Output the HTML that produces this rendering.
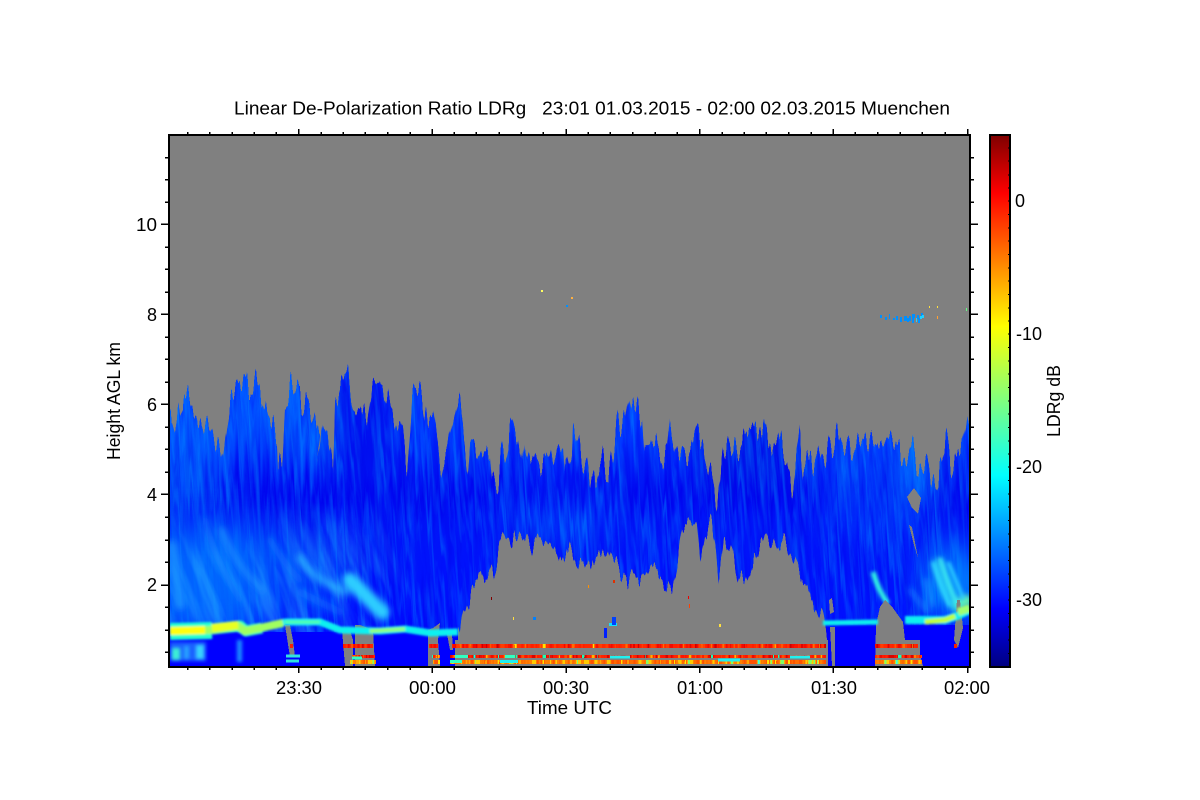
<!DOCTYPE html>
<html><head><meta charset="utf-8"><title>LDRg</title>
<style>html,body{margin:0;padding:0;background:#fff;width:1200px;height:800px;overflow:hidden}svg{display:block}text{font-family:"Liberation Sans",sans-serif;font-size:18px;fill:#000}</style></head>
<body>
<svg width="1200" height="800" viewBox="0 0 1200 800" xmlns="http://www.w3.org/2000/svg">
<defs>
<linearGradient id="jet" x1="0" y1="1" x2="0" y2="0">
<stop offset="0" stop-color="#00007f"/><stop offset=".11" stop-color="#0000ff"/><stop offset=".36" stop-color="#00ffff"/><stop offset=".5" stop-color="#7fff7f"/><stop offset=".64" stop-color="#ffff00"/><stop offset=".89" stop-color="#ff0000"/><stop offset="1" stop-color="#7f0000"/>
</linearGradient>
<linearGradient id="base" x1="0" y1="380" x2="0" y2="666" gradientUnits="userSpaceOnUse">
<stop offset="0" stop-color="#0038ff"/><stop offset=".18" stop-color="#0034ff"/><stop offset=".38" stop-color="#0006f0"/><stop offset=".48" stop-color="#0014f8"/><stop offset=".8" stop-color="#0010ff"/><stop offset="1" stop-color="#0000ff"/>
</linearGradient>
<linearGradient id="fadeX" x1="170" y1="0" x2="420" y2="0" gradientUnits="userSpaceOnUse">
<stop offset="0" stop-color="#fff"/><stop offset=".75" stop-color="#fff"/><stop offset="1" stop-color="#000"/>
</linearGradient>
<linearGradient id="fadeY" x1="0" y1="502" x2="0" y2="570" gradientUnits="userSpaceOnUse">
<stop offset="0" stop-color="#000" stop-opacity="1"/><stop offset="1" stop-color="#000" stop-opacity="0"/>
</linearGradient>
<mask id="lowmask" maskUnits="userSpaceOnUse" x="160" y="480" width="280" height="160"><g>
<rect x="160" y="480" width="280" height="160" fill="url(#fadeX)"/>
<rect x="160" y="480" width="280" height="160" fill="url(#fadeY)"/>
</g></mask>
<clipPath id="plot"><rect x="170" y="136" width="800" height="530"/></clipPath>
<clipPath id="cloud"><polygon points="170,402 172,400 177,417 180,393 183,387 188,393 197,402 207,423 213,435 220,440 223,448 227,407 230,390 240,390 247,382 253,382 263,403 268,417 277,423 278,450 282,458 285,397 300,390 313,405 320,430 317,460 323,417 328,430 333,460 335,387 340,380 348,375 353,397 363,407 367,420 372,385 383,375 390,400 393,413 400,427 407,457 412,393 422,385 428,417 433,423 440,460 443,447 447,447 450,433 453,413 457,398 460,410 465,440 468,463 470,437 480,443 490,450 492,480 498,470 505,443 510,420 518,440 522,467 525,433 530,450 535,447 540,453 550,457 557,430 563,437 565,470 572,447 573,423 578,437 587,460 590,480 600,457 610,460 613,447 618,423 625,410 628,389 632,413 642,410 645,447 657,440 667,450 670,417 678,447 687,443 692,445 697,433 703,443 713,477 717,497 723,450 733,430 740,450 747,430 763,425 768,443 778,438 787,457 793,480 800,428 803,460 820,452 835,442 842,435 853,438 862,433 867,428 883,433 900,442 917,453 927,460 933,477 947,445 953,460 962,450 968,410 970,410 970,700 170,700"/></clipPath>
<filter id="b18" filterUnits="userSpaceOnUse" x="100" y="440" width="900" height="240"><feGaussianBlur stdDeviation="18"/></filter>
<filter id="b14" filterUnits="userSpaceOnUse" x="100" y="340" width="900" height="300"><feGaussianBlur stdDeviation="14"/></filter>
<filter id="b3" filterUnits="userSpaceOnUse" x="150" y="500" width="840" height="180"><feGaussianBlur stdDeviation="3.2"/></filter>
<filter id="b2" filterUnits="userSpaceOnUse" x="150" y="500" width="840" height="180"><feGaussianBlur stdDeviation="1.8"/></filter>
<filter id="b1" filterUnits="userSpaceOnUse" x="160" y="590" width="820" height="60"><feGaussianBlur stdDeviation="1.1"/></filter>
<filter id="tl" filterUnits="userSpaceOnUse" x="-300" y="370" width="1400" height="300">
<feTurbulence type="fractalNoise" baseFrequency="0.22 0.012" numOctaves="3" seed="7"/>
<feColorMatrix type="matrix" values="0 0 0 0 0  0 0 0 0 .55  0 0 0 0 1  2.6 0 0 0 -1.05"/>
</filter>
<filter id="td" filterUnits="userSpaceOnUse" x="-300" y="370" width="1400" height="300">
<feTurbulence type="fractalNoise" baseFrequency="0.16 0.014" numOctaves="3" seed="21"/>
<feColorMatrix type="matrix" values="0 0 0 0 0  0 0 0 0 0  0 0 0 0 .82  2.8 0 0 0 -1.25"/>
</filter>
<filter id="tc" filterUnits="userSpaceOnUse" x="-300" y="370" width="1400" height="300">
<feTurbulence type="fractalNoise" baseFrequency="0.07 0.012" numOctaves="3" seed="33"/>
<feColorMatrix type="matrix" values="0 0 0 0 .05  0 0 0 0 .68  0 0 0 0 1  3 0 0 0 -1.25"/>
</filter>
<filter id="jag" filterUnits="userSpaceOnUse" x="160" y="340" width="820" height="370" color-interpolation-filters="sRGB">
<feTurbulence type="fractalNoise" baseFrequency="0.2 0.004" numOctaves="2" seed="4" result="n"/>
<feColorMatrix in="n" type="matrix" values="0 0 0 0 .5  1.8 0 0 0 -.53  0 0 0 0 .5  0 0 0 0 1" result="m"/>
<feDisplacementMap in="SourceGraphic" in2="m" scale="46" xChannelSelector="R" yChannelSelector="G"/>
</filter>
<filter id="jag2" filterUnits="userSpaceOnUse" x="440" y="500" width="410" height="210" color-interpolation-filters="sRGB">
<feTurbulence type="fractalNoise" baseFrequency="0.22 0.006" numOctaves="2" seed="11" result="n"/>
<feColorMatrix in="n" type="matrix" values="0 0 0 0 .5  1.8 0 0 0 -.4  0 0 0 0 .5  0 0 0 0 1" result="m"/>
<feDisplacementMap in="SourceGraphic" in2="m" scale="26" xChannelSelector="R" yChannelSelector="G"/>
</filter>
<filter id="band1" x="0" y="0" width="1" height="1" color-interpolation-filters="sRGB">
<feTurbulence type="fractalNoise" baseFrequency="0.28 0.001" numOctaves="2" seed="2"/>
<feColorMatrix type="matrix" values="1 0 0 0 0  1 0 0 0 0  1 0 0 0 0  0 0 0 0 1"/>
<feComponentTransfer>
<feFuncR type="discrete" tableValues="1 1 .8 .95 1 1 1 1 1 1"/>
<feFuncG type="discrete" tableValues=".9 .9 0 .04 .12 .16 .24 .42 .9 .9"/>
<feFuncB type="discrete" tableValues="0 0 0 0 0 0 0 0 0 0"/>
</feComponentTransfer>
</filter>
<filter id="band2" x="0" y="0" width="1" height="1" color-interpolation-filters="sRGB">
<feTurbulence type="fractalNoise" baseFrequency="0.26 0.001" numOctaves="2" seed="9"/>
<feColorMatrix type="matrix" values="1 0 0 0 0  1 0 0 0 0  1 0 0 0 0  0 0 0 0 1"/>
<feComponentTransfer>
<feFuncR type="discrete" tableValues="0 0 .1 .85 1 1 1 1 1 1"/>
<feFuncG type="discrete" tableValues="1 1 1 .02 .08 .14 .3 .7 1 1"/>
<feFuncB type="discrete" tableValues="1 1 .7 0 0 0 0 0 0 0"/>
</feComponentTransfer>
</filter>
<filter id="band3" x="0" y="0" width="1" height="1" color-interpolation-filters="sRGB">
<feTurbulence type="fractalNoise" baseFrequency="0.24 0.001" numOctaves="2" seed="15"/>
<feColorMatrix type="matrix" values="1 0 0 0 0  1 0 0 0 0  1 0 0 0 0  0 0 0 0 1"/>
<feComponentTransfer>
<feFuncR type="discrete" tableValues=".2 .2 .5 1 1 1 1 1 .1 .1"/>
<feFuncG type="discrete" tableValues="1 1 1 .8 .5 .42 .32 .9 1 1"/>
<feFuncB type="discrete" tableValues=".9 .9 .4 0 0 0 0 0 1 1"/>
</feComponentTransfer>
</filter>
</defs>

<rect x="169" y="135" width="801" height="531" fill="#808080"/>

<g clip-path="url(#plot)">
<g filter="url(#jag)">
<g clip-path="url(#cloud)">
<rect x="170" y="370" width="800" height="330" fill="url(#base)"/>
<g filter="url(#b14)">
<rect x="150" y="400" width="70" height="100" fill="#0068ff" opacity=".75"/>
<rect x="235" y="395" width="28" height="60" fill="#0070ff" opacity=".7"/>
<rect x="285" y="395" width="35" height="70" fill="#0070ff" opacity=".75"/>
<rect x="335" y="375" width="60" height="90" fill="#0000e8" opacity=".7"/>
<rect x="700" y="420" width="90" height="60" fill="#0000e0" opacity=".7"/>
<rect x="840" y="430" width="30" height="60" fill="#0070ff" opacity=".55"/>
<rect x="895" y="440" width="40" height="60" fill="#0080ff" opacity=".8"/>
<rect x="500" y="495" width="120" height="40" fill="#0058ff" opacity=".5"/>
<rect x="820" y="470" width="90" height="60" fill="#0040ff" opacity=".5"/>
</g>
<g transform="skewX(6)"><rect x="-100" y="380" width="1100" height="240" filter="url(#tl)" opacity=".32"/></g>
<g transform="skewX(4)"><rect x="-100" y="380" width="1100" height="240" filter="url(#td)" opacity=".38"/></g>
</g>
</g>
<!-- undisplaced soft areas -->
<g filter="url(#b18)">
<rect x="150" y="525" width="110" height="110" fill="#0078ff" opacity=".8"/>
<rect x="255" y="535" width="85" height="80" fill="#0060ff" opacity=".55"/>
<rect x="930" y="550" width="45" height="65" fill="#00a0ff" opacity=".95"/>
</g>
<!-- diagonal streak texture on the lower left -->
<g mask="url(#lowmask)"><g transform="skewX(20)"><rect x="-100" y="500" width="700" height="130" filter="url(#tc)" opacity=".3"/></g></g>
<!-- bright diagonal features -->
<g fill="none" stroke-linecap="round" filter="url(#b3)">
<path d="M172 545 L180 605" stroke="#30b8ff" stroke-width="9" opacity=".55"/>
<path d="M222 530 Q235 565 262 590" stroke="#28a8ff" stroke-width="6" opacity=".55"/>
<path d="M205 520 Q215 560 240 600" stroke="#1890ff" stroke-width="6" opacity=".4"/>
<path d="M270 540 Q285 565 300 580" stroke="#1890ff" stroke-width="6" opacity=".45"/>
<path d="M300 558 Q312 578 345 592" stroke="#30c0ff" stroke-width="8" opacity=".7"/>
<path d="M350 580 Q362 592 382 612" stroke="#30d8ff" stroke-width="15" opacity=".95"/>
<path d="M300 592 Q325 605 340 612" stroke="#1890ff" stroke-width="7" opacity=".45"/>
<path d="M926 580 L932 605" stroke="#20c0ff" stroke-width="4" opacity=".7"/>
<path d="M910 590 L928 612" stroke="#20b0ff" stroke-width="4" opacity=".6"/>
<path d="M958 605 L968 600" stroke="#70ffa0" stroke-width="10"/>
<path d="M938 565 Q946 590 956 606" stroke="#30e8f0" stroke-width="14" opacity=".6"/>
</g>
<g fill="none" filter="url(#b2)">
<path d="M873 572 Q878 590 888 604" stroke="#30ffe0" stroke-width="5"/>
<path d="M933 562 Q942 590 950 606" stroke="#30e0ff" stroke-width="3.500" opacity=".9"/>
<path d="M940 558 Q948 585 957 604" stroke="#40f0f0" stroke-width="3.500" opacity=".9"/>
<path d="M948 562 Q956 580 964 600" stroke="#30d8ff" stroke-width="3.500" opacity=".9"/>
</g>
<!-- below melting layer -->
<rect x="170" y="636" width="800" height="30" fill="#0000ff"/>
<rect x="205" y="632" width="260" height="34" fill="#0000ff"/>
<rect x="823" y="625" width="147" height="41" fill="#0000ff"/>
<g filter="url(#b2)">
<rect x="170" y="642" width="36" height="19" fill="#30b0ff" opacity=".55"/>
<rect x="172" y="648" width="8" height="12" fill="#40ffd0" opacity=".9"/>
<rect x="184" y="646" width="5" height="13" fill="#30d0ff" opacity=".6"/>
<rect x="196" y="645" width="8" height="14" fill="#40e8ff" opacity=".85"/>
<rect x="237" y="640" width="5" height="22" fill="#20a0ff" opacity=".9"/>
</g>

<!-- grey hole -->
<polygon filter="url(#jag2)" fill="#808080" points="458,700 458,640 460,630 463,610 473,590 490,577 497,560 500,548 508,538 515,532 522,538 530,548 537,535 545,540 555,556 563,567 567,552 573,558 578,568 585,572 592,560 600,552 612,558 622,570 628,578 640,577 650,565 655,572 660,580 672,585 677,560 682,530 690,525 697,530 700,560 705,535 712,525 716,550 719,577 722,560 724,545 732,548 740,580 744,583 748,570 752,560 760,550 768,537 778,543 787,548 793,565 800,580 807,585 815,605 823,623 828,643 828,700"/>
<g fill="#808080" shape-rendering="crispEdges">
<rect x="458" y="640" width="370" height="26"/>
<polygon points="285,625 290,625 293,640 295,657 290,657"/>
<polygon points="342,630 350,630 353,640 353,666 345,666"/>
<polygon points="355,625 360,625 368,628 373,630 375,666 355,666"/>
<polygon points="428,630 433,628 440,623 438,640 440,666 428,666"/>
<polygon points="447,634 452,634 453,650 450,650"/>
<polygon points="455,640 458,640 458,666 455,666"/>
<polygon points="830,627 835,627 835,666 832,666"/>
<polygon points="829,600 832,598 834,612 830,614"/>
<polygon points="876,625 880,607 885,600 893,608 903,622 905,640 920,640 920,655 923,666 875,666"/>
<polygon points="957,600 960,600 963,628 958,648 954,640"/>
<polygon points="907,497 914,488 921,498 918,514 912,508"/>
<polygon points="909,525 912,527 918,558 914,545"/>
</g>

<!-- melting layer -->
<g fill="none" stroke-linejoin="round" stroke-linecap="butt" filter="url(#b1)">
<path d="M170 631 L205 630 L235 627 L245 632 L262 628 L285 622 L320 622 L340 630 L380 631 L405 629 L430 633 L458 632" stroke="#10f0f0" stroke-width="7"/>
<path d="M170 631.500 L212 630.500" stroke="#20ffd0" stroke-width="17"/>
<path d="M212 629 L240 626 L246 631 L262 628" stroke="#30ffc0" stroke-width="11"/>
<path d="M170 631 L210 630 L238 626 L245 631 L260 628 L283 623" stroke="#a0ff60" stroke-width="8"/>
<path d="M170 631 L205 630" stroke="#ffff10" stroke-width="8"/>
<path d="M212 628 L238 625" stroke="#e8ff20" stroke-width="8"/>
<path d="M285 622 L320 622" stroke="#50ffb0" stroke-width="3"/>
<path d="M370 631 L405 629" stroke="#90ff80" stroke-width="4"/>
<path d="M823 623 L878 622" stroke="#10f0f0" stroke-width="5"/>
<path d="M905 620 L945 620 L957 616 L970 610" stroke="#10f0f0" stroke-width="8"/>
<path d="M925 622 L945 620 L955 616" stroke="#c0ff40" stroke-width="5"/>
<path d="M958 612 L970 608" stroke="#a0ff70" stroke-width="8"/>
</g>

<!-- lower red/orange bands (noise mapped through the colour table) -->
<g shape-rendering="crispEdges">
<rect x="452" y="644" width="374" height="4" filter="url(#band1)"/>
<rect x="343" y="644" width="30" height="4" filter="url(#band1)"/>
<rect x="429" y="644" width="9" height="4" filter="url(#band1)"/>
<rect x="875" y="644" width="43" height="4" filter="url(#band1)"/>
<rect x="290" y="644" width="3" height="4" fill="#f82000"/>
<rect x="954" y="644" width="3" height="4" fill="#f82000"/>
<rect x="450" y="655" width="376" height="3" filter="url(#band2)"/>
<rect x="352" y="655" width="23" height="3" filter="url(#band2)"/>
<rect x="432" y="655" width="8" height="3" filter="url(#band2)"/>
<rect x="875" y="655" width="47" height="3" filter="url(#band2)"/>
<rect x="450" y="660" width="376" height="4" filter="url(#band3)"/>
<rect x="350" y="660" width="26" height="4" filter="url(#band3)"/>
<rect x="433" y="660" width="7" height="4" filter="url(#band3)"/>
<rect x="875" y="660" width="47" height="4" filter="url(#band3)"/>
<path d="M500 661.500H518M610 657H630M718 660H740M790 657H810" stroke="#20f0f0" stroke-width="3" fill="none"/>
<path d="M455 656.500H468M450 661.500H462M505 656.500H515M352 658H362" stroke="#30ffc0" stroke-width="3" fill="none"/>
<path d="M286 656H300M286 661H299" stroke="#30e0e0" stroke-width="3" fill="none"/>
</g>

<!-- small specks -->
<g shape-rendering="crispEdges">
<rect x="609" y="623" width="8" height="3" fill="#10e0ff"/><rect x="612" y="617" width="4" height="8" fill="#0040ff"/>
<rect x="604" y="628" width="3" height="10" fill="#0020ff"/><rect x="613" y="580" width="2" height="3" fill="#e03000"/>
<rect x="491" y="597" width="1" height="3" fill="#800000"/><rect x="513" y="617" width="1" height="3" fill="#ffe040"/>
<rect x="533" y="617" width="3" height="3" fill="#0080ff"/><rect x="588" y="585" width="1" height="3" fill="#ff9000"/>
<rect x="688" y="596" width="1" height="3" fill="#f00000"/>
<rect x="689" y="604" width="1" height="4" fill="#ff4000"/><rect x="719" y="624" width="2" height="3" fill="#ffe040"/>
<rect x="541" y="290" width="2" height="2" fill="#ffff60"/><rect x="571" y="297" width="2" height="2" fill="#ffb040"/><rect x="566" y="305" width="2" height="2" fill="#0090ff"/>
<rect x="929" y="306" width="1" height="2" fill="#ffe040"/><rect x="937" y="306" width="1" height="2" fill="#ffe040"/><rect x="937" y="316" width="1" height="3" fill="#ffa030"/><rect x="966" y="308" width="1" height="3" fill="#60ff80"/>
<path d="M880 315h2v3h-2zM885 317h2v3h-2zM889 314h1v5h-1zM893 318h2v2h-2zM896 316h2v4h-2zM900 317h2v5h-2zM904 316h3v5h-3zM907 318h2v4h-2zM909 316h2v5h-2zM912 314h3v4h-3zM917 315h2v4h-2zM912 318h2v5h-2zM921 313h2v4h-2zM918 318h2v5h-2z" fill="#0090ff"/>
<path d="M916 318h1v4h-1zM922 315h2v3h-2zM920 316h2v3h-2z" fill="#20d0ff"/>
</g>
</g>

<!-- frame + ticks -->
<g stroke="#000" fill="none" shape-rendering="crispEdges" stroke-width="1.5">
<rect x="169" y="135" width="801" height="532" stroke-width="2"/>
<path d="M187.500 135v-3M209.500 135v-3M232 135v-3M254 135v-3M276 135v-3M298.500 135v-6M321 135v-3M343 135v-3M365 135v-3M387.500 135v-3M410 135v-3M432 135v-6M454 135v-3M476 135v-3M499 135v-3M521 135v-3M543 135v-3M566 135v-6M588 135v-3M610 135v-3M632.500 135v-3M655 135v-3M677 135v-3M699.500 135v-6M722 135v-3M744 135v-3M766 135v-3M788.500 135v-3M811 135v-3M833 135v-6M855 135v-3M877.500 135v-3M900 135v-3M922 135v-3M945 135v-3M967.500 135v-6"/>
<path d="M187.500 667v3M209.500 667v3M232 667v3M254 667v3M276 667v3M298.500 667v6M321 667v3M343 667v3M365 667v3M387.500 667v3M410 667v3M432 667v6M454 667v3M476 667v3M499 667v3M521 667v3M543 667v3M566 667v6M588 667v3M610 667v3M632.500 667v3M655 667v3M677 667v3M699.500 667v6M722 667v3M744 667v3M766 667v3M788.500 667v3M811 667v3M833 667v6M855 667v3M877.500 667v3M900 667v3M922 667v3M945 667v3M967.500 667v6"/>
<path d="M169 157.500h-4M169 179.500h-4M169 202h-4M169 224h-8M169 247h-4M169 269h-4M169 292h-4M169 314h-8M169 337h-4M169 359h-4M169 382h-4M169 404h-8M169 427h-4M169 449h-4M169 472h-4M169 494h-8M169 517h-4M169 540h-4M169 562h-4M169 585h-8M169 607h-4M169 630h-4M169 652h-4"/>
<path d="M970 157.500h4M970 179.500h4M970 202h4M970 224h8M970 247h4M970 269h4M970 292h4M970 314h8M970 337h4M970 359h4M970 382h4M970 404h8M970 427h4M970 449h4M970 472h4M970 494h8M970 517h4M970 540h4M970 562h4M970 585h8M970 607h4M970 630h4M970 652h4"/>
</g>

<!-- colour bar -->
<rect x="990" y="135" width="20" height="532" fill="url(#jet)" stroke="#000" stroke-width="2" shape-rendering="crispEdges"/>
<path d="M1010 148h-2M1010 161h-2M1010 175h-2M1010 188h-2M1010 201h-2M1010 214.500h-2M1010 228h-2M1010 241h-2M1010 254.500h-2M1010 268h-2M1010 281h-2M1010 294.500h-2M1010 308h-2M1010 321h-2M1010 334h-2M1010 347.500h-2M1010 361h-2M1010 374h-2M1010 387.500h-2M1010 401h-2M1010 414h-2M1010 427.500h-2M1010 441h-2M1010 454h-2M1010 467h-2M1010 480.500h-2M1010 494h-2M1010 507h-2M1010 520.500h-2M1010 534h-2M1010 547h-2M1010 560.500h-2M1010 574h-2M1010 587h-2M1010 600h-2M1010 613.500h-2M1010 627h-2M1010 640h-2M1010 653.500h-2" stroke="#000" fill="none" shape-rendering="crispEdges"/>

<!-- text -->
<text x="234" y="114.500" xml:space="preserve" textLength="716" lengthAdjust="spacingAndGlyphs">Linear De-Polarization Ratio LDRg   23:01 01.03.2015 - 02:00 02.03.2015 Muenchen</text>
<text x="136" y="231" textLength="21" lengthAdjust="spacingAndGlyphs">10</text>
<text x="147" y="321">8</text>
<text x="147" y="411">6</text>
<text x="147" y="501">4</text>
<text x="147" y="591">2</text>
<text x="276" y="694" textLength="46" lengthAdjust="spacingAndGlyphs">23:30</text>
<text x="409" y="694" textLength="47" lengthAdjust="spacingAndGlyphs">00:00</text>
<text x="543" y="694" textLength="46" lengthAdjust="spacingAndGlyphs">00:30</text>
<text x="677" y="694" textLength="46" lengthAdjust="spacingAndGlyphs">01:00</text>
<text x="811" y="694" textLength="46" lengthAdjust="spacingAndGlyphs">01:30</text>
<text x="944" y="694" textLength="46" lengthAdjust="spacingAndGlyphs">02:00</text>
<text x="527" y="714" textLength="85" lengthAdjust="spacingAndGlyphs">Time UTC</text>
<text transform="translate(120 460) rotate(-90)" textLength="118" lengthAdjust="spacingAndGlyphs">Height AGL km</text>
<text x="1015" y="207">0</text>
<text x="1016" y="340" textLength="26" lengthAdjust="spacingAndGlyphs">-10</text>
<text x="1016" y="473" textLength="26" lengthAdjust="spacingAndGlyphs">-20</text>
<text x="1016" y="606" textLength="26" lengthAdjust="spacingAndGlyphs">-30</text>
<text transform="translate(1060 437) rotate(-90)" textLength="72" lengthAdjust="spacingAndGlyphs">LDRg dB</text>
</svg>
</body></html>
